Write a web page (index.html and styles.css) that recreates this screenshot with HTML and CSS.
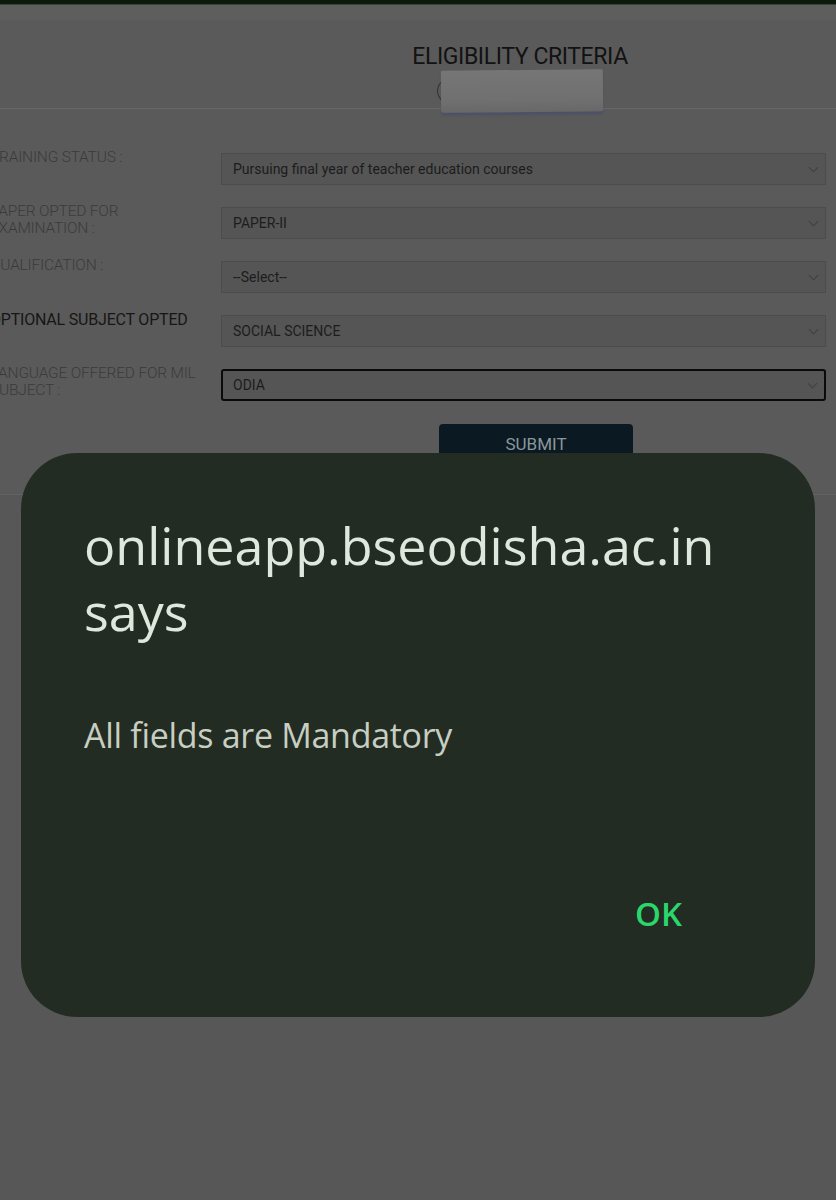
FILE: index.html
```html
<!DOCTYPE html>
<html lang="en">
<head>
    <meta charset="UTF-8">
    <meta name="viewport" content="width=device-width, initial-scale=1.0">
    <title>Eligibility Criteria</title>
    <link rel="stylesheet" href="styles.css">
</head>
<body>

    <div class="topbar"></div>
    <div class="strip"></div>

    <div class="page">
        <div class="header">
            <h2>ELIGIBILITY CRITERIA</h2>
            <div class="redact">
                <span class="arc"></span>
                <span class="blur"></span>
            </div>
        </div>

        <div class="form">
            <div class="row">
                <label>TRAINING STATUS :</label>
                <div class="select"><span>Pursuing final year of teacher education courses</span><i class="chev"></i></div>
            </div>
            <div class="row">
                <label>PAPER OPTED FOR<br>EXAMINATION :</label>
                <div class="select"><span>PAPER-II</span><i class="chev"></i></div>
            </div>
            <div class="row">
                <label>QUALIFICATION :</label>
                <div class="select"><span>--Select--</span><i class="chev"></i></div>
            </div>
            <div class="row">
                <label class="strong">OPTIONAL SUBJECT OPTED</label>
                <div class="select"><span>SOCIAL SCIENCE</span><i class="chev"></i></div>
            </div>
            <div class="row">
                <label>LANGUAGE OFFERED FOR MIL<br>SUBJECT :</label>
                <div class="select focused"><span>ODIA</span><i class="chev"></i></div>
            </div>
            <div class="actions">
                <button>SUBMIT</button>
            </div>
        </div>
    </div>

    <div class="dialog">
        <h1>onlineapp.bseodisha.ac.in says</h1>
        <p>All fields are Mandatory</p>
        <div class="dialog-actions">
            <span class="ok">OK</span>
        </div>
    </div>

</body>
</html>
```

FILE: styles.css
```css
* {
    margin: 0;
    padding: 0;
    box-sizing: border-box;
}

body {
    font-family: Roboto, "Liberation Sans", sans-serif;
    background-color: #575757;
    width: 836px;
    height: 1200px;
    overflow: hidden;
    position: relative;
}

.topbar {
    height: 5px;
    background-color: #0e190e;
    border-bottom: 1px solid #2c4a2c;
}

.strip {
    height: 15px;
    background-color: #5e5e5e;
}

.page {
    background-color: #5a5a5a;
    height: 475px;
    border-bottom: 1px solid #626262;
}

.header {
    display: flex;
    flex-direction: column;
    align-items: center;
    padding-left: 204px;
    padding-top: 25px;
    border-bottom: 1px solid #676767;
    height: 89px;
}

h2 {
    font-weight: 400;
    font-size: 23px;
    color: #121212;
    letter-spacing: -0.4px;
    line-height: 24px;
}

.redact {
    display: flex;
    align-items: center;
    margin-top: 1px;
}

.arc {
    width: 12px;
    height: 24px;
    border: 1px solid #333;
    border-right: none;
    border-radius: 12px 0 0 12px;
    margin-right: -8px;
}

.blur {
    width: 162px;
    height: 42px;
    background: linear-gradient(180deg, #767676 0%, #707070 70%, #686868 100%);
    border-radius: 2px;
    box-shadow: 0 3px 2px rgba(60, 70, 120, 0.45);
    transform: rotate(-0.6deg);
}

.form {
    padding-top: 44px;
    margin-left: -10px;
}

.row {
    display: flex;
    align-items: flex-start;
    height: 54px;
}

label {
    width: 231px;
    margin-top: -4px;
    font-size: 15.5px;
    font-weight: 300;
    color: #3a3a3a;
    line-height: 17px;
    letter-spacing: -0.2px;
}

label.strong {
    font-weight: 400;
    color: #161616;
    font-size: 16px;
}

.select {
    width: 605px;
    height: 32px;
    background-color: #555555;
    border: 1px solid #4c4c4c;
    display: flex;
    align-items: center;
    justify-content: space-between;
    padding: 0 8px 0 11px;
    font-size: 14px;
    color: #1c1c1c;
}

.select.focused {
    border: 2px solid #0a0a0a;
    border-radius: 3px;
    padding-left: 10px;
}

.chev {
    width: 7px;
    height: 7px;
    border-right: 1px solid #404040;
    border-bottom: 1px solid #404040;
    transform: rotate(45deg);
    margin-top: -4px;
}

.actions {
    padding-left: 449px;
    margin-top: 1px;
}

button {
    width: 194px;
    height: 44px;
    background-color: #0b1a22;
    color: #8a979c;
    border: none;
    border-radius: 4px;
    font-family: Roboto, "Liberation Sans", sans-serif;
    font-size: 17px;
    padding-bottom: 4px;
}

.dialog {
    position: absolute;
    top: 453px;
    left: 21px;
    width: 794px;
    height: 564px;
    background-color: #232c22;
    border-radius: 56px;
    padding: 59px 63px 0;
    display: flex;
    flex-direction: column;
}

.dialog h1 {
    font-family: "Open Sans", sans-serif;
    font-weight: 400;
    font-size: 52px;
    line-height: 66px;
    color: #dfe8dc;
    letter-spacing: 0;
    width: 668px;
}

.dialog p {
    font-family: "Open Sans", sans-serif;
    font-size: 34px;
    color: #c7cfc3;
    margin-top: 68px;
    letter-spacing: -0.3px;
}

.dialog-actions {
    display: flex;
    justify-content: flex-end;
    margin-top: 133px;
    padding-right: 70px;
}

.ok {
    font-family: "Open Sans", sans-serif;
    font-size: 33px;
    font-weight: 600;
    color: #2bd66d;
}
```
